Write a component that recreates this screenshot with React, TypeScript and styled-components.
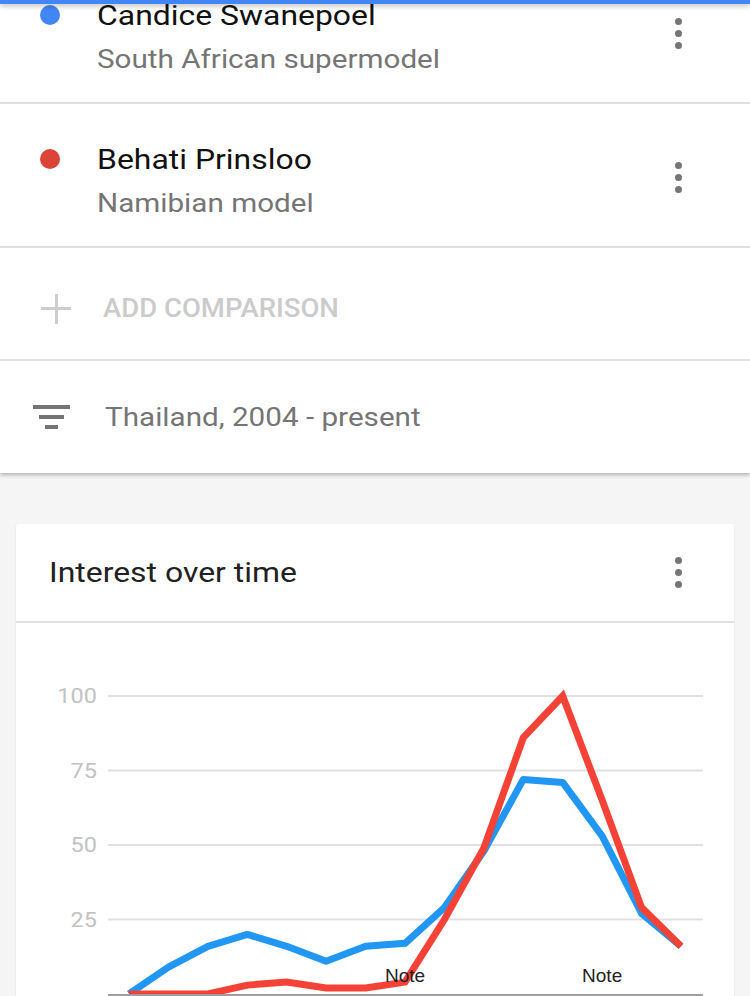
import React from "react";
import styled, { createGlobalStyle, css } from "styled-components";

const GlobalStyle = createGlobalStyle`
  html, body {
    margin: 0;
    padding: 0;
    background: #f5f5f5;
    font-family: Roboto, "Noto Sans", Arial, sans-serif;
    overflow: hidden;
  }
`;

/* the reference screenshot is horizontally stretched by about 14% */
const stretched = css`
  display: inline-block;
  transform: scaleX(1.14);
  transform-origin: left center;
  white-space: nowrap;
`;

const AppBarEdge = styled.div`
  position: fixed;
  top: 0;
  left: 0;
  right: 0;
  height: 4px;
  background: #4285f4;
  box-shadow: 0 2px 5px rgba(0, 0, 0, 0.28);
  z-index: 10;
`;

const Page = styled.div`
  width: 750px;
  height: 996px;
  overflow: hidden;
`;

const TopPanel = styled.section`
  margin-top: -40px;
  background: #fff;
  box-shadow: 0 2px 4px rgba(0, 0, 0, 0.28);
`;

const TermRow = styled.div`
  display: flex;
  align-items: flex-start;
  height: 142px;
  padding: 0 68px 0 40px;
  box-sizing: content-box;
  border-bottom: 2px solid #e0e0e0;
`;

const Dot = styled.span<{ $color: string }>`
  flex: none;
  width: 20px;
  height: 20px;
  margin-top: 45px;
  border-radius: 50%;
  background: ${(p) => p.$color};
`;

const TermText = styled.div`
  flex: 1;
  margin-left: 37px;
  padding-top: 38px;
  display: flex;
  flex-direction: column;
  align-items: flex-start;
  gap: 8px;
`;

const TermTitle = styled.div`
  ${stretched};
  font-size: 28px;
  line-height: 36px;
  color: #111;
`;

const TermSub = styled.div`
  ${stretched};
  font-size: 26px;
  line-height: 34px;
  color: #757575;
`;

const Kebab = styled.span<{ $top: number }>`
  flex: none;
  display: flex;
  flex-direction: column;
  gap: 5px;
  margin-top: ${(p) => p.$top}px;
  & > i {
    display: block;
    width: 7px;
    height: 7px;
    border-radius: 50%;
    background: #757575;
  }
`;

const ActionRow = styled.div<{ $h: number; $pt: number; $border?: boolean }>`
  display: flex;
  align-items: center;
  height: ${(p) => p.$h}px;
  padding-top: ${(p) => p.$pt}px;
  box-sizing: border-box;
  ${(p) => (p.$border ? "border-bottom: 2px solid #e0e0e0;" : "")}
`;

const PlusIcon = styled.span`
  position: relative;
  flex: none;
  width: 30px;
  height: 30px;
  margin-left: 41px;
  &::before,
  &::after {
    content: "";
    position: absolute;
    background: #cdcdcd;
  }
  &::before {
    left: 0;
    right: 0;
    top: 13.5px;
    height: 3px;
  }
  &::after {
    top: 0;
    bottom: 0;
    left: 13.5px;
    width: 3px;
  }
`;

const AddLabel = styled.span`
  ${stretched};
  margin-left: 32px;
  font-size: 25px;
  font-weight: 500;
  color: #cbcbcb;
  transform: scaleX(1.1);
`;

const FilterIcon = styled.span`
  flex: none;
  margin-left: 33px;
  display: flex;
  flex-direction: column;
  align-items: center;
  gap: 6px;
  & > i {
    display: block;
    height: 4px;
    background: #757575;
  }
`;

const FilterBar = styled.i<{ $w: number }>`
  width: ${(p) => p.$w}px;
`;

const FilterLabel = styled.span`
  ${stretched};
  margin-left: 35px;
  font-size: 26px;
  color: #757575;
`;

const Card = styled.section`
  margin: 51px 16px 0;
  background: #fff;
  border-radius: 3px;
  box-shadow: 0 1px 2px rgba(0, 0, 0, 0.12);
`;

const CardHeader = styled.div`
  display: flex;
  align-items: center;
  justify-content: space-between;
  height: 97px;
  padding: 0 52px 0 33px;
  border-bottom: 2px solid #e0e0e0;
`;

const CardTitle = styled.h2`
  ${stretched};
  margin: 0;
  font-size: 28px;
  font-weight: 400;
  color: #212121;
`;

const ChartSvg = styled.svg`
  display: block;
`;

const blue = [0, 9, 16, 20, 16, 11, 16, 17, 29, 48, 72, 71, 53, 27, 16];
const red = [0, 0, 0, 3, 4, 2, 2, 4, 25, 49, 86, 100, 65, 29, 16];

const X0 = 113;
const DX = 39.43;
const AXIS_Y = 371;
const PER = 2.98;

const toPoints = (vals: number[]) =>
  vals.map((v, i) => `${(X0 + i * DX).toFixed(1)},${(AXIS_Y - v * PER).toFixed(1)}`).join(" ");

const Chart: React.FC = () => {
  const grid = [100, 75, 50, 25];
  const notes = [7, 12];
  return (
    <ChartSvg width={718} height={380} viewBox="0 0 718 380">
      {grid.map((g) => {
        const y = AXIS_Y - g * PER;
        return (
          <g key={g}>
            <line x1={92} x2={687} y1={y} y2={y} stroke="#e0e0e0" strokeWidth={2} />
            <text
              transform={`translate(81 ${y + 7}) scale(1.12 1)`}
              textAnchor="end"
              fontFamily="Roboto, sans-serif"
              fontSize={21}
              fill="#c2c2c2"
            >
              {g}
            </text>
          </g>
        );
      })}
      <polyline points={toPoints(blue)} fill="none" stroke="#2196f3" strokeWidth={7} strokeLinejoin="round" />
      <polyline points={toPoints(red)} fill="none" stroke="#f44336" strokeWidth={7} strokeLinejoin="miter" />
      <line x1={92} x2={687} y1={AXIS_Y + 1} y2={AXIS_Y + 1} stroke="#9e9e9e" strokeWidth={2} />
      {notes.map((n) => {
        const x = X0 + n * DX;
        return (
          <g key={n}>
            <line x1={x} x2={x} y1={AXIS_Y} y2={AXIS_Y + 10} stroke="#9e9e9e" strokeWidth={1.5} />
            <text
              x={x}
              y={AXIS_Y - 12}
              textAnchor="middle"
              fontFamily="'Liberation Sans', Arial, sans-serif"
              fontSize={19}
              fill="#222"
            >
              Note
            </text>
          </g>
        );
      })}
    </ChartSvg>
  );
};

const terms = [
  { name: "Candice Swanepoel", desc: "South African supermodel", color: "#4285f4" },
  { name: "Behati Prinsloo", desc: "Namibian model", color: "#db4437" },
];

export default function App() {
  return (
    <>
      <GlobalStyle />
      <AppBarEdge />
      <Page>
        <TopPanel>
          {terms.map((t) => (
            <TermRow key={t.name}>
              <Dot $color={t.color} />
              <TermText>
                <TermTitle>{t.name}</TermTitle>
                <TermSub>{t.desc}</TermSub>
              </TermText>
              <Kebab $top={58}>
                <i />
                <i />
                <i />
              </Kebab>
            </TermRow>
          ))}
          <ActionRow $h={113} $pt={10} $border>
            <PlusIcon />
            <AddLabel>ADD COMPARISON</AddLabel>
          </ActionRow>
          <ActionRow $h={112} $pt={0}>
            <FilterIcon>
              <FilterBar $w={37} />
              <FilterBar $w={25} />
              <FilterBar $w={13} />
            </FilterIcon>
            <FilterLabel>Thailand, 2004 - present</FilterLabel>
          </ActionRow>
        </TopPanel>
        <Card>
          <CardHeader>
            <CardTitle>Interest over time</CardTitle>
            <Kebab $top={0}>
              <i />
              <i />
              <i />
            </Kebab>
          </CardHeader>
          <Chart />
        </Card>
      </Page>
    </>
  );
}
